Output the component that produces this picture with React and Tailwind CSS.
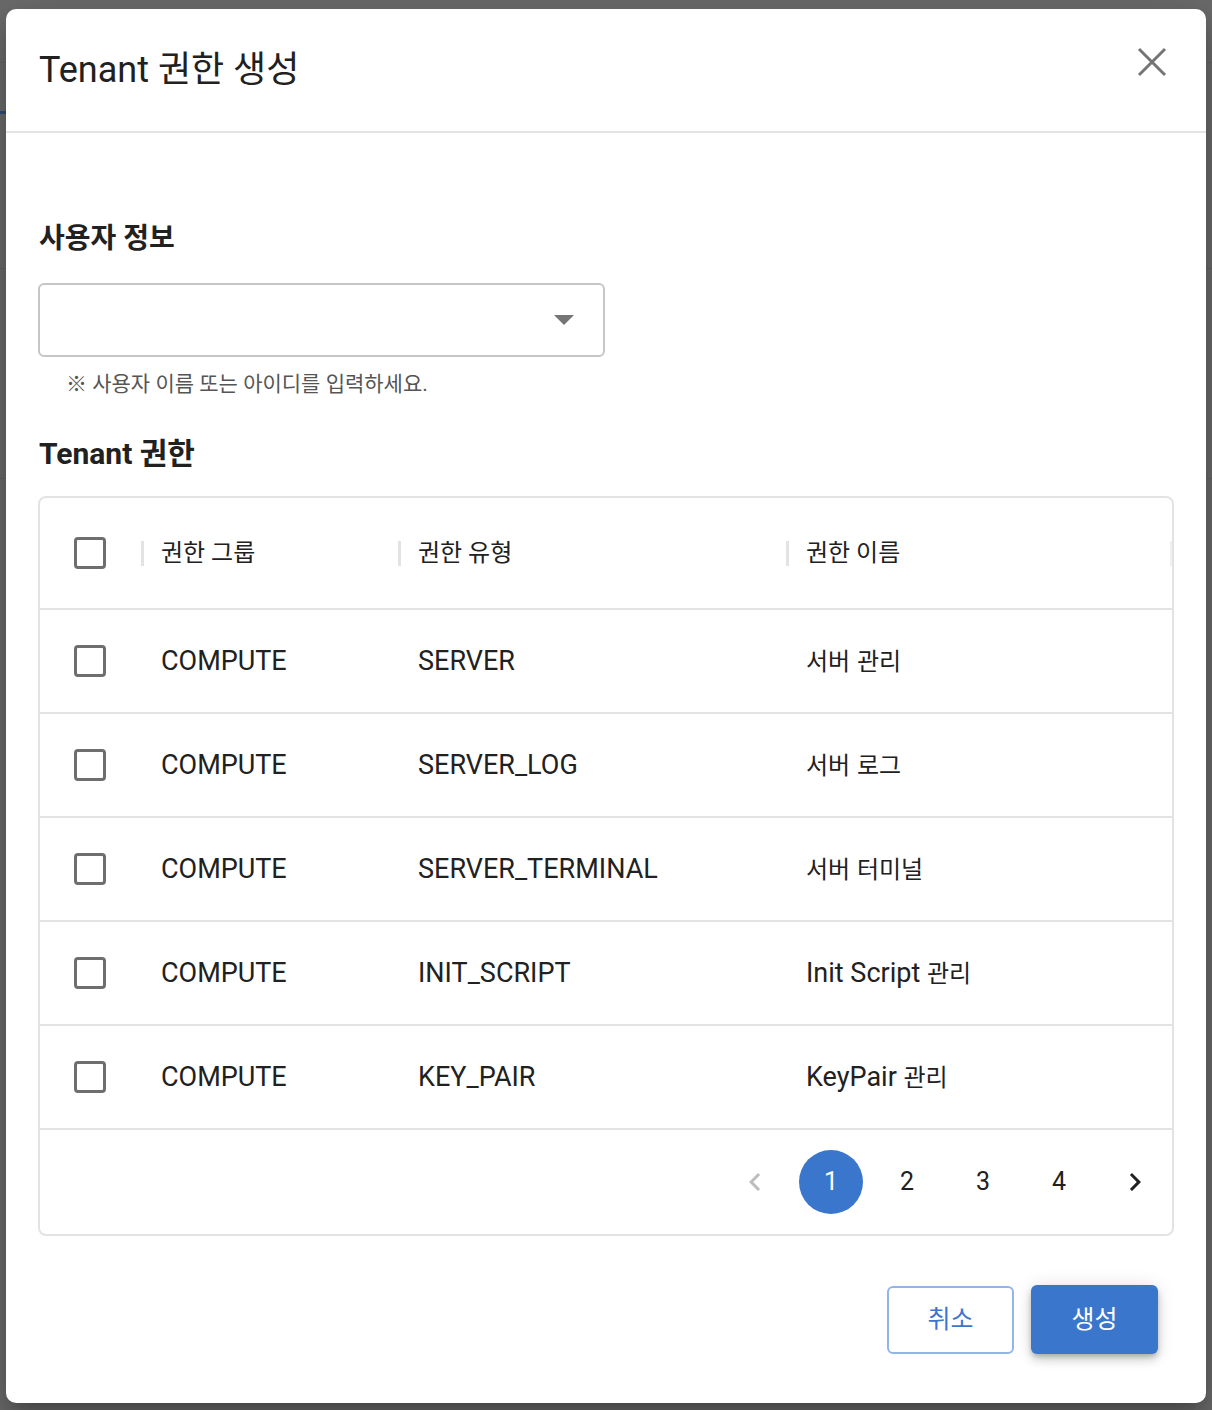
import React from "react";

const HANGUL = /([\u1100-\u11FF\u3130-\u318F\uAC00-\uD7A3\u203B]+)/;

function Mixed({ text, ko }) {
  return text
    .split(HANGUL)
    .filter(Boolean)
    .map((part, i) =>
      HANGUL.test(part) ? (
        <span key={i} className={ko}>
          {part}
        </span>
      ) : (
        <span key={i}>{part}</span>
      )
    );
}

function Checkbox() {
  return <div className="w-[32px] h-[32px] border-[3px] border-[#6e6e6e] rounded-[4px] bg-white" />;
}

const rows = [
  ["COMPUTE", "SERVER", "서버 관리"],
  ["COMPUTE", "SERVER_LOG", "서버 로그"],
  ["COMPUTE", "SERVER_TERMINAL", "서버 터미널"],
  ["COMPUTE", "INIT_SCRIPT", "Init Script 관리"],
  ["COMPUTE", "KEY_PAIR", "KeyPair 관리"],
];

function HeaderCell({ label }) {
  return (
    <div className="flex items-center">
      <span className="w-[3px] h-[25px] bg-[#e3e3e3]" />
      <span className="ml-[17px] text-[24px] text-[#212121]">{label}</span>
    </div>
  );
}

export default function App() {
  return (
    <div className="relative w-full min-h-[1410px] bg-[#6b6b6b] pt-[9px] pl-[6px] font-['Roboto','Noto_Sans_CJK_KR',sans-serif] overflow-hidden">
      {/* faint remnants of the page underneath */}
      <div className="absolute left-0 right-0 top-[62px] h-[1px] bg-[#636363]" />
      <div className="absolute left-0 w-[6px] top-[111px] h-[3px] bg-[#2d4d7d]" />
      <div className="absolute left-0 right-0 top-[268px] h-[1px] bg-[#636363]" />
      <div className="absolute left-0 right-0 top-[478px] h-[1px] bg-[#636363]" />

      <div className="relative w-[1200px] bg-white rounded-[10px] shadow-[0_11px_15px_-7px_rgba(0,0,0,0.2),0_24px_38px_3px_rgba(0,0,0,0.14),0_9px_46px_8px_rgba(0,0,0,0.12)] flex flex-col">
        {/* Header */}
        <div className="h-[124px] border-b-2 border-[#e3e3e3] flex items-center justify-between pl-[33px] pr-[39px]">
          <h1 className="text-[36px] text-[#212121] leading-none">
            <Mixed text="Tenant 권한 생성" ko="text-[36px]" />
          </h1>
          <svg width="30" height="30" viewBox="0 0 30 30" className="text-[#757575] mb-[16px]">
            <path d="M2 2 L28 28 M28 2 L2 28" stroke="currentColor" strokeWidth="3" fill="none" />
          </svg>
        </div>

        {/* Body */}
        <div className="px-[32px] flex flex-col">
          <h2 className="mt-[88px] h-[36px] leading-[36px] text-[28px] font-bold text-[#212121] pl-[1px]">
            사용자 정보
          </h2>
          <div className="mt-[26px] w-[567px] h-[74px] border-2 border-[#c6c6c6] rounded-[6px] flex items-center justify-end pr-[29px]">
            <svg width="20" height="10" viewBox="0 0 20 10">
              <path d="M0 0 L20 0 L10 10 Z" fill="#757575" />
            </svg>
          </div>
          <p className="mt-[13px] h-[28px] leading-[28px] pl-[28px] text-[21px] text-[#555555]">
            <Mixed text="※ 사용자 이름 또는 아이디를 입력하세요." ko="text-[21px]" />
          </p>
          <h2 className="mt-[38px] h-[36px] leading-[36px] text-[30px] font-bold text-[#212121] pl-[1px]">
            <Mixed text="Tenant 권한" ko="text-[30px]" />
          </h2>

          {/* Table */}
          <div className="mt-[24px] border-2 border-[#e3e3e3] rounded-[8px] flex flex-col">
            <div className="h-[112px] border-b-2 border-[#e3e3e3] grid grid-cols-[101px_257px_388px_1fr]">
              <div className="flex items-center pl-[34px]">
                <Checkbox />
              </div>
              <HeaderCell label="권한 그룹" />
              <HeaderCell label="권한 유형" />
              <div className="flex items-center justify-between">
                <div className="flex items-center">
                  <span className="w-[3px] h-[25px] bg-[#e3e3e3]" />
                  <span className="ml-[17px] text-[24px] text-[#212121]">권한 이름</span>
                </div>
                <span className="w-[2px] h-[25px] bg-[#f0f0f0]" />
              </div>
            </div>
            {rows.map((r, i) => (
              <div
                key={i}
                className="h-[104px] border-b-2 border-[#e3e3e3] grid grid-cols-[101px_257px_388px_1fr] text-[27px] text-[#212121]"
              >
                <div className="flex items-center pl-[34px]">
                  <Checkbox />
                </div>
                <div className="flex items-center pl-[20px]">{r[0]}</div>
                <div className="flex items-center pl-[20px]">{r[1]}</div>
                <div className="flex items-center pl-[20px]">
                  <span>
                    <Mixed text={r[2]} ko="text-[24px]" />
                  </span>
                </div>
              </div>
            ))}
            <div className="h-[104px] flex items-center justify-end pr-[5px] gap-[12px] text-[25px] text-[#212121]">
              <div className="w-[64px] h-[64px] flex items-center justify-center">
                <svg width="36" height="36" viewBox="0 0 24 24">
                  <path d="M15.41 7.41 14 6l-6 6 6 6 1.41-1.41L10.83 12z" fill="#bdbdbd" />
                </svg>
              </div>
              <div className="w-[64px] h-[64px] rounded-full bg-[#3a76cc] text-white flex items-center justify-center">
                1
              </div>
              <div className="w-[64px] h-[64px] flex items-center justify-center">2</div>
              <div className="w-[64px] h-[64px] flex items-center justify-center">3</div>
              <div className="w-[64px] h-[64px] flex items-center justify-center">4</div>
              <div className="w-[64px] h-[64px] flex items-center justify-center">
                <svg width="36" height="36" viewBox="0 0 24 24">
                  <path d="M10 6 8.59 7.41 13.17 12l-4.58 4.59L10 18l6-6z" fill="#212121" />
                </svg>
              </div>
            </div>
          </div>
        </div>

        {/* Footer */}
        <div className="mt-[49px] pb-[49px] pr-[48px] flex justify-end items-center gap-[17px]">
          <button className="w-[127px] h-[68px] border-2 border-[#93b5e6] rounded-[6px] text-[25px] text-[#3a76cc] bg-white">
            취소
          </button>
          <button className="w-[127px] h-[69px] rounded-[6px] text-[25px] text-white bg-[#3a76cc] shadow-[0_3px_5px_-1px_rgba(0,0,0,0.2),0_6px_10px_0_rgba(0,0,0,0.14),0_1px_18px_0_rgba(0,0,0,0.12)]">
            생성
          </button>
        </div>
      </div>
    </div>
  );
}
